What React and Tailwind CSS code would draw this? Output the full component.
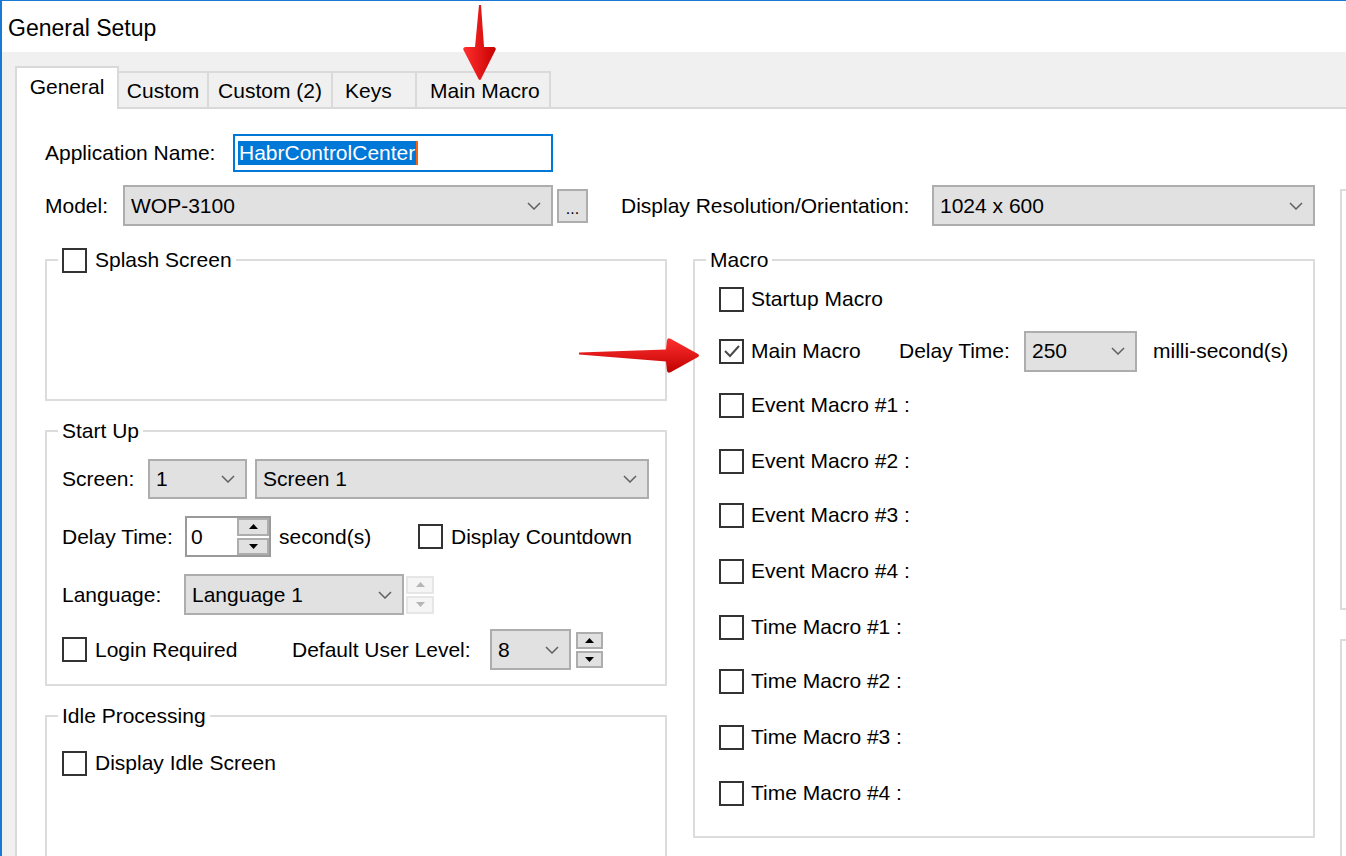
import React from "react";

function Chevron() {
  return (
    <svg width="14" height="8" viewBox="0 0 14 8" className="shrink-0">
      <path d="M1 1 L7 7 L13 1" fill="none" stroke="#606060" strokeWidth="1.5" />
    </svg>
  );
}

function Select({ className, value }) {
  return (
    <div className={`flex items-center justify-between bg-[#e1e1e1] border-2 border-[#adadad] pl-[6px] pr-[10px] shrink-0 ${className}`}>
      <span>{value}</span>
      <Chevron />
    </div>
  );
}

function Checkbox({ checked }) {
  return (
    <span className="w-[25px] h-[25px] border-2 border-[#333333] bg-white flex items-center justify-center shrink-0">
      {checked && (
        <svg width="18" height="14" viewBox="0 0 18 14">
          <path d="M2 7 L7 12 L16 2" fill="none" stroke="#4a4a4a" strokeWidth="2" />
        </svg>
      )}
    </span>
  );
}

function Spin({ className, faded }) {
  const box = faded ? "border-[#e6e6e6] bg-[#f5f5f5]" : "border-[#adadad] bg-[#e1e1e1]";
  const tri = faded ? "#b5b5b5" : "#000000";
  return (
    <div className={`flex flex-col gap-[2px] shrink-0 ${className}`}>
      <div className={`flex-1 border-2 flex items-center justify-center ${box}`}>
        <svg width="9" height="5" viewBox="0 0 9 5"><path d="M0 5 L4.5 0 L9 5Z" fill={tri} /></svg>
      </div>
      <div className={`flex-1 border-2 flex items-center justify-center ${box}`}>
        <svg width="9" height="5" viewBox="0 0 9 5"><path d="M0 0 L4.5 5 L9 0Z" fill={tri} /></svg>
      </div>
    </div>
  );
}

function Legend({ children }) {
  return (
    <legend className="ml-[-4px] px-[4px] leading-[24px] h-[24px] flex items-center">{children}</legend>
  );
}

const macroRows = [
  { label: "Startup Macro", mt: "mt-[7px]" },
  { label: "Main Macro", mt: "mt-[12px]", main: true },
  { label: "Event Macro #1 :", mt: "mt-[14px]" },
  { label: "Event Macro #2 :", mt: "mt-[16px]" },
  { label: "Event Macro #3 :", mt: "mt-[14px]" },
  { label: "Event Macro #4 :", mt: "mt-[16px]" },
  { label: "Time Macro #1 :", mt: "mt-[16px]" },
  { label: "Time Macro #2 :", mt: "mt-[14px]" },
  { label: "Time Macro #3 :", mt: "mt-[16px]" },
  { label: "Time Macro #4 :", mt: "mt-[16px]" },
];

export default function App() {
  return (
    <div className="relative w-[1346px] h-[856px] overflow-hidden bg-[#f0f0f0] border-t border-l-2 border-[#1979d4] font-['Liberation_Sans','Arial',sans-serif] text-[21px] leading-[24px] text-black flex flex-col">
      {/* Title bar */}
      <div className="h-[51px] bg-white flex items-center pl-[6px] pb-[-1px] text-[23px] shrink-0">
        <span className="mt-[2px]">General Setup</span>
      </div>

      {/* Tabs */}
      <div className="h-[55px] flex items-end pl-[13px] shrink-0">
        <div className="relative z-10 w-[104px] h-[43px] -mb-[2px] bg-white border-2 border-b-0 border-[#d9d9d9] flex items-start justify-center pt-[7px]">General</div>
        <div className="w-[90px] h-[36px] border-t-2 border-r-2 border-[#dadada] flex items-center justify-center pt-[2px]">Custom</div>
        <div className="w-[124px] h-[36px] border-t-2 border-r-2 border-[#dadada] flex items-center justify-center pt-[2px]">Custom (2)</div>
        <div className="w-[84px] h-[36px] border-t-2 border-r-2 border-[#dadada] flex items-center pl-[12px] pt-[2px]">Keys</div>
        <div className="w-[134px] h-[36px] border-t-2 border-r-2 border-[#dadada] flex items-center pl-[13px] pt-[2px]">Main Macro</div>
      </div>

      {/* Panel */}
      <div className="flex-1 ml-[13px] bg-white border-t-2 border-l-2 border-[#d9d9d9] flex pl-[28px]">
        <div className="w-[1270px] flex flex-col shrink-0">
          {/* Application name */}
          <div className="mt-[25px] h-[38px] flex items-center">
            <span className="w-[188px] shrink-0">Application Name:</span>
            <div className="w-[320px] h-[38px] border-2 border-[#0078d7] bg-white flex items-center pl-[3px]">
              <span className="bg-[#0078d7] text-white h-[24px] leading-[24px] px-[1px]">HabrControlCenter</span>
              <span className="w-[2px] h-[24px] bg-[#f7630c]" />
            </div>
          </div>

          {/* Model row */}
          <div className="mt-[13px] h-[41px] flex items-center">
            <span className="w-[78px] shrink-0">Model:</span>
            <Select className="w-[430px] h-[41px]" value="WOP-3100" />
            <div className="ml-[4px] w-[31px] h-[34px] bg-[#e1e1e1] border-2 border-[#adadad] flex items-end justify-center pb-[4px] text-[16px] leading-[16px]">...</div>
            <span className="ml-[33px] w-[311px] shrink-0">Display Resolution/Orientation:</span>
            <Select className="w-[383px] h-[41px]" value="1024 x 600" />
          </div>

          {/* Columns */}
          <div className="mt-[22px] flex gap-[26px]">
            {/* Left column */}
            <div className="w-[622px] flex flex-col">
              <fieldset className="h-[153px] border-2 border-[#dcdcdc] px-[15px]">
                <Legend>
                  <Checkbox />
                  <span className="ml-[8px]">Splash Screen</span>
                </Legend>
              </fieldset>

              <fieldset className="mt-[18px] h-[267px] border-2 border-[#dcdcdc] px-[15px]">
                <Legend>Start Up</Legend>
                <div className="mt-[16px] h-[40px] flex items-center">
                  <span className="w-[86px] shrink-0">Screen:</span>
                  <Select className="w-[99px] h-[40px]" value="1" />
                  <Select className="ml-[8px] w-[394px] h-[40px]" value="Screen 1" />
                </div>
                <div className="mt-[17px] h-[41px] flex items-center">
                  <span className="w-[123px] shrink-0">Delay Time:</span>
                  <div className="w-[86px] h-[41px] border-2 border-[#9a9a9a] bg-white flex items-center">
                    <span className="flex-1 pl-[4px]">0</span>
                    <Spin className="w-[32px] h-[37px]" />
                  </div>
                  <span className="ml-[8px] w-[139px] shrink-0">second(s)</span>
                  <Checkbox />
                  <span className="ml-[8px]">Display Countdown</span>
                </div>
                <div className="mt-[17px] h-[41px] flex items-center">
                  <span className="w-[122px] shrink-0">Language:</span>
                  <Select className="w-[220px] h-[41px]" value="Language 1" />
                  <Spin faded className="ml-[2px] w-[28px] h-[38px]" />
                </div>
                <div className="mt-[14px] h-[41px] flex items-center">
                  <Checkbox />
                  <span className="ml-[8px] w-[197px] shrink-0">Login Required</span>
                  <span className="w-[198px] shrink-0">Default User Level:</span>
                  <Select className="w-[81px] h-[41px]" value="8" />
                  <Spin className="ml-[5px] w-[27px] h-[36px]" />
                </div>
              </fieldset>

              <fieldset className="mt-[18px] h-[200px] border-2 border-[#dcdcdc] px-[15px]">
                <Legend>Idle Processing</Legend>
                <div className="mt-[15px] h-[40px] flex items-center">
                  <Checkbox />
                  <span className="ml-[8px]">Display Idle Screen</span>
                </div>
              </fieldset>
            </div>

            {/* Right column */}
            <div className="w-[622px] flex flex-col">
              <fieldset className="h-[590px] border-2 border-[#dcdcdc] px-[24px]">
                <legend className="ml-[-13px] px-[4px] leading-[24px] h-[24px]">Macro</legend>
                {macroRows.map((r) => (
                  <div key={r.label} className={`${r.mt} h-[40px] flex items-center`}>
                    <Checkbox checked={r.main} />
                    {r.main ? (
                      <>
                        <span className="ml-[7px] w-[148px] shrink-0">Main Macro</span>
                        <span className="w-[125px] shrink-0">Delay Time:</span>
                        <Select className="w-[113px] h-[41px]" value="250" />
                        <span className="ml-[16px]">milli-second(s)</span>
                      </>
                    ) : (
                      <span className="ml-[7px]">{r.label}</span>
                    )}
                  </div>
                ))}
              </fieldset>
            </div>
          </div>
        </div>

        {/* Right partial boxes */}
        <div className="ml-[25px] flex flex-col shrink-0">
          <div className="mt-[80px] w-[100px] h-[421px] border-2 border-r-0 border-[#dcdcdc]" />
          <div className="mt-[29px] w-[100px] h-[300px] border-2 border-r-0 border-[#dcdcdc]" />
        </div>
      </div>

      {/* Red arrows (annotations overlaying the dialog) */}
      <svg className="absolute left-[459px] top-[2px]" width="38" height="80" viewBox="0 0 38 80">
        <defs>
          <linearGradient id="gv" x1="0" y1="0" x2="1" y2="0">
            <stop offset="0" stopColor="#ff3030" />
            <stop offset="1" stopColor="#c80000" />
          </linearGradient>
        </defs>
        <path d="M18 2 L20 2 L23 44 L33 44 Q36 45 34 48 L20 76 Q19 78 17.5 76 L3 48 Q1 45 4 44 L14 44 Z" fill="url(#gv)" />
      </svg>
      <svg className="absolute left-[575px] top-[335px]" width="124" height="40" viewBox="0 0 124 40">
        <defs>
          <linearGradient id="gh" x1="0" y1="0" x2="0" y2="1">
            <stop offset="0" stopColor="#ff3030" />
            <stop offset="1" stopColor="#c00000" />
          </linearGradient>
        </defs>
        <path d="M2 16.5 L89 13.5 L90 4 Q91 1 94 3 L121 18 Q123 19.5 121 21 L94 36 Q91 38 90 35 L89 25.5 L2 18.5 Z" fill="url(#gh)" />
      </svg>
    </div>
  );
}
